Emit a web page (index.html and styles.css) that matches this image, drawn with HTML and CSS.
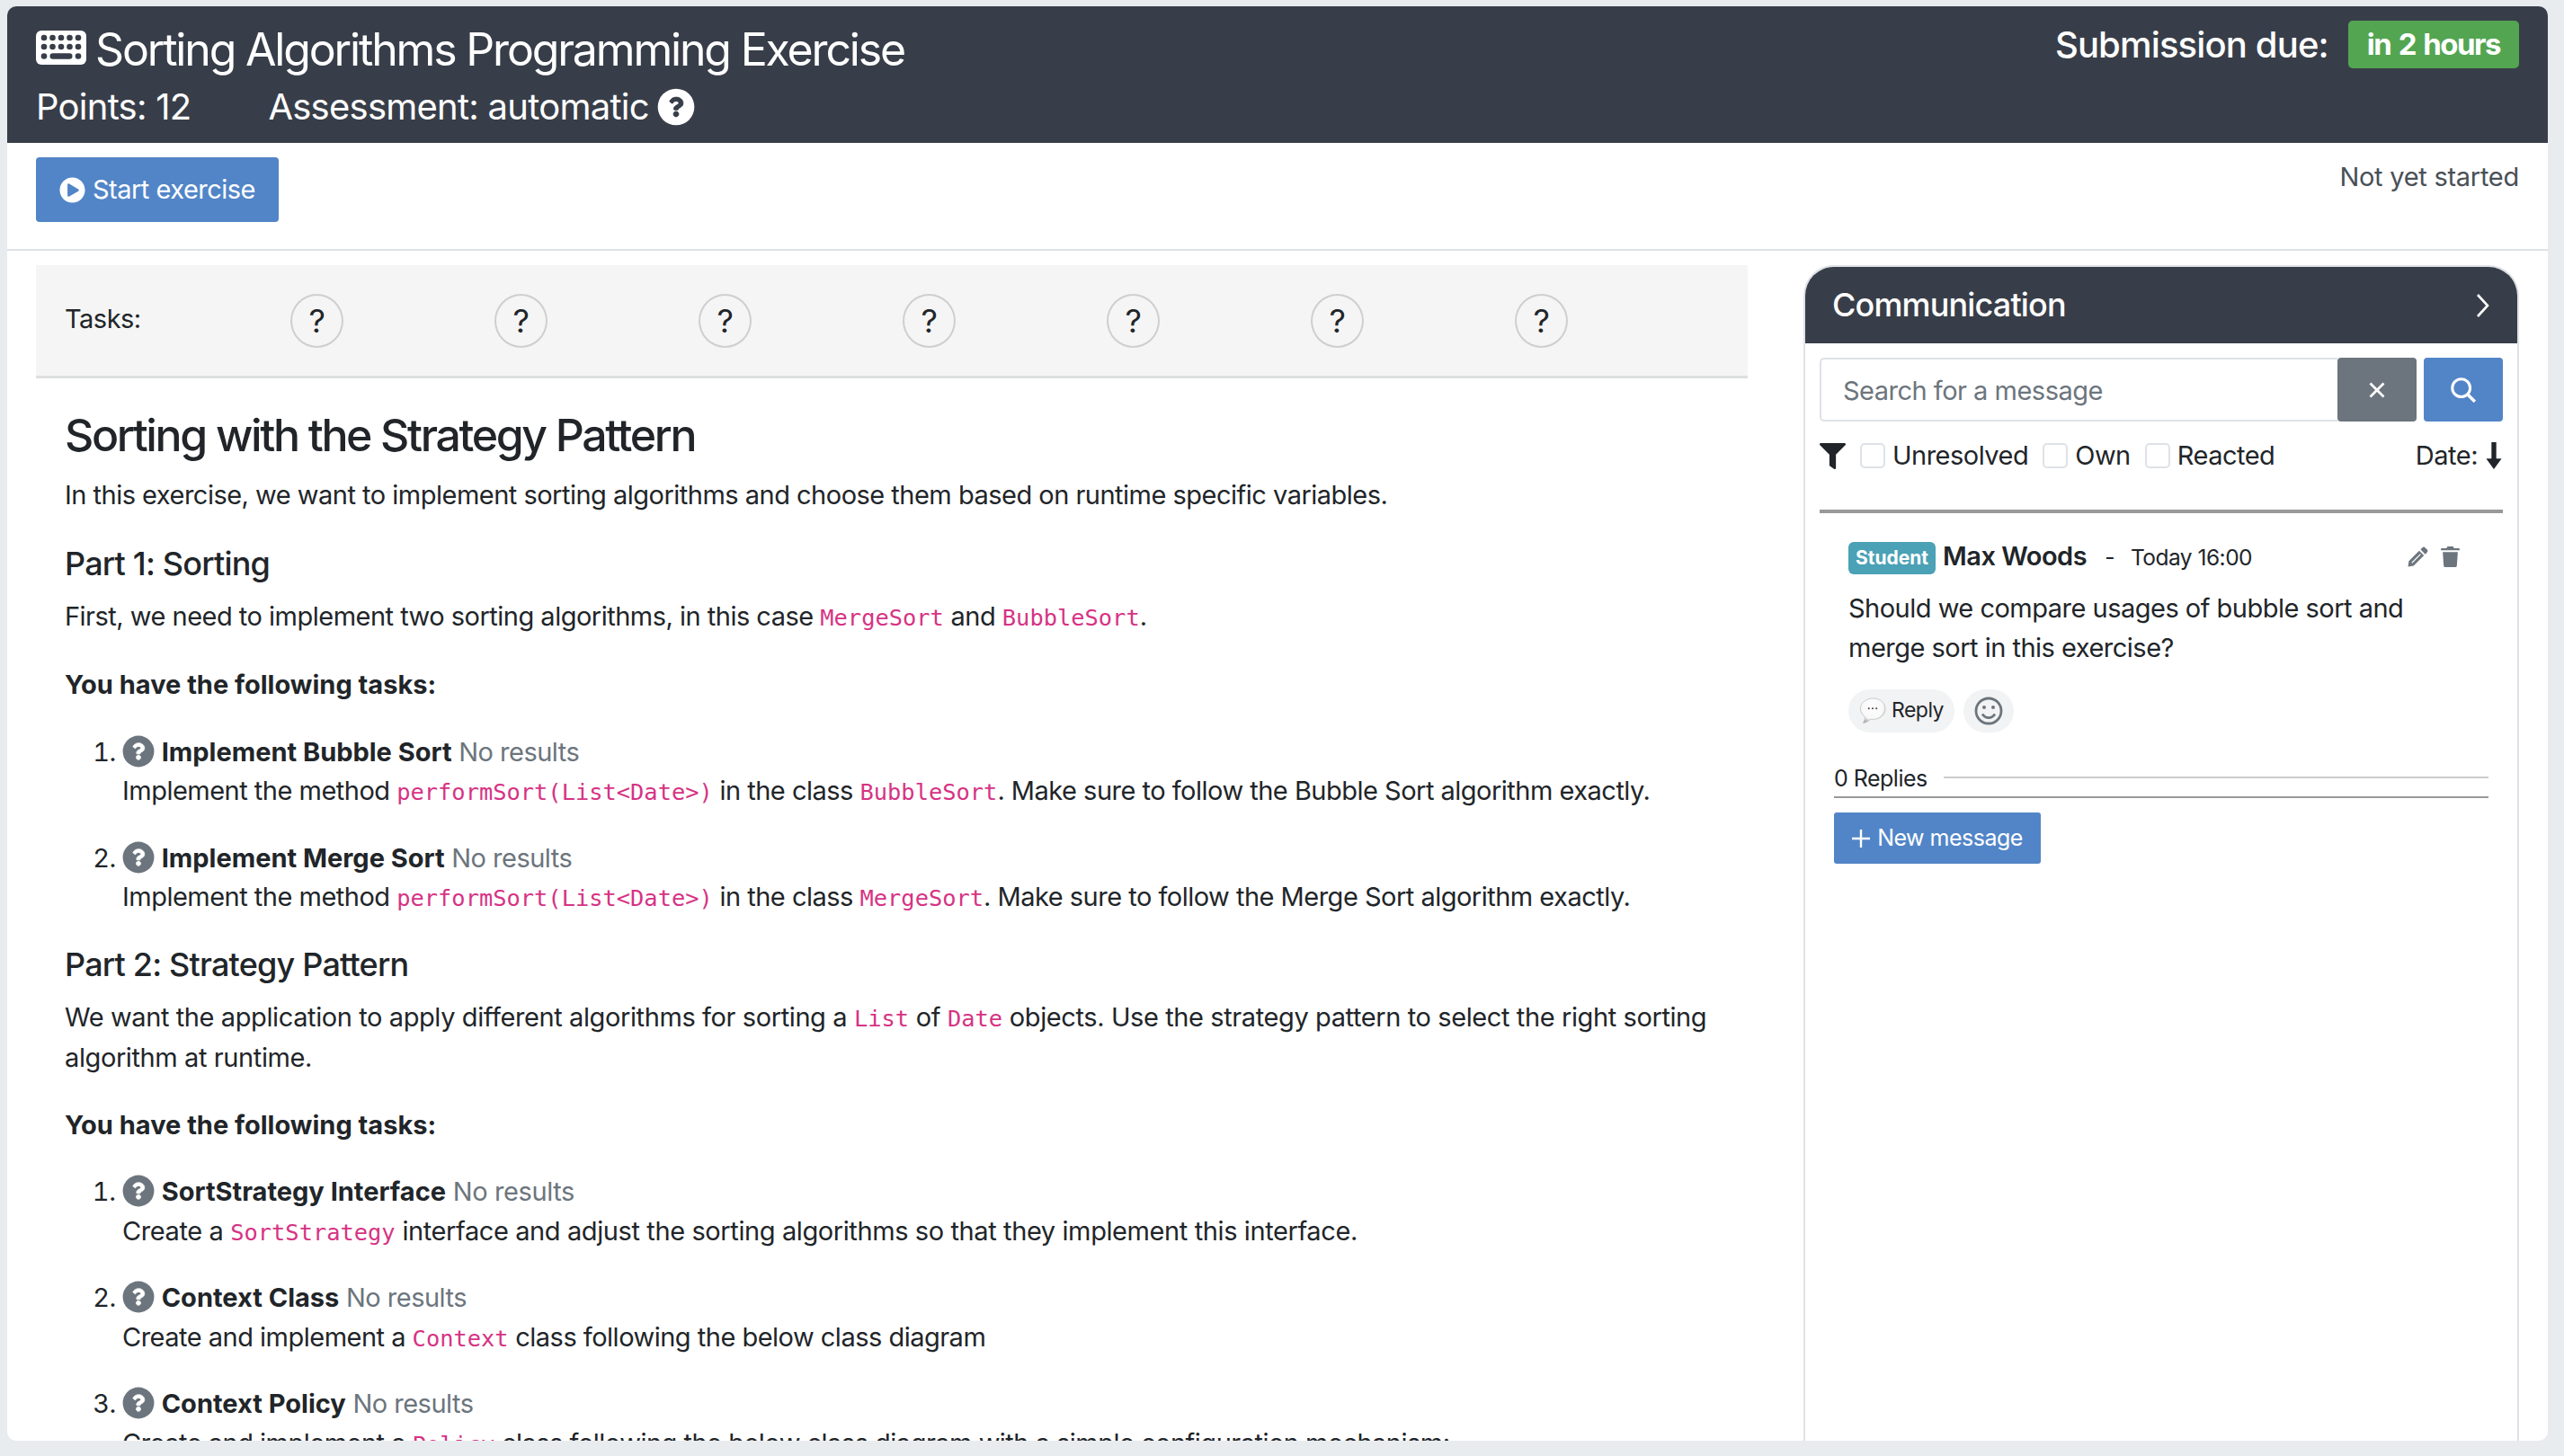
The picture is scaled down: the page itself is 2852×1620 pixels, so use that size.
FILE: index.html
```html
<!DOCTYPE html>
<html lang="en">
<head>
<meta charset="utf-8">
<title>Sorting Algorithms Programming Exercise</title>
<link rel="stylesheet" href="styles.css">
</head>
<body>
<svg class="defs" width="0" height="0" aria-hidden="true">
  <defs>
    <radialGradient id="bubble-fill" cx="48%" cy="38%" r="62%"><stop offset="0%" stop-color="#fff"/><stop offset="72%" stop-color="#f8f8f8"/><stop offset="100%" stop-color="#a8a8a8"/></radialGradient>
  </defs>
  <symbol id="q" viewBox="0 0 512 512"><circle cx="256" cy="256" r="248" fill="currentColor"/><path class="q-mark" transform="translate(256 256) scale(.78) translate(-256 -260)" d="M262.655 90c-54.497 0-89.255 22.957-116.549 63.758-3.536 5.286-2.353 12.415 2.715 16.258l34.699 26.31c5.205 3.947 12.621 3.008 16.665-2.122 17.864-22.658 30.113-35.797 57.303-35.797 20.429 0 45.698 13.148 45.698 32.958 0 14.976-12.363 22.667-32.534 33.976C247.128 238.528 216 254.941 216 296v4c0 6.627 5.373 12 12 12h56c6.627 0 12-5.373 12-12v-1.333c0-28.462 83.186-29.647 83.186-106.667 0-58.002-60.165-102-116.531-102zM256 338c-25.365 0-46 20.635-46 46 0 25.364 20.635 46 46 46s46-20.636 46-46c0-25.365-20.635-46-46-46z"/></symbol>
</svg>
<main class="card">
  <header class="head">
    <div class="head-left">
      <h1 class="title">
        <svg class="kbd" viewBox="0 0 56 38"><rect width="56" height="38" rx="6" fill="#fff"/><g fill="#383e49"><circle cx="9" cy="8" r="3.300"/><circle cx="18.500" cy="8" r="3.300"/><circle cx="28" cy="8" r="3.300"/><circle cx="37.500" cy="8" r="3.300"/><circle cx="47" cy="8" r="3.300"/><circle cx="9" cy="18" r="3.300"/><circle cx="18.500" cy="18" r="3.300"/><circle cx="28" cy="18" r="3.300"/><circle cx="37.500" cy="18" r="3.300"/><circle cx="47" cy="18" r="3.300"/><circle cx="9" cy="28.500" r="3.300"/><rect x="15.500" y="25.200" width="25" height="6.600" rx="3.300"/><circle cx="47" cy="28.500" r="3.300"/></g></svg>
        <span>Sorting Algorithms Programming Exercise</span>
      </h1>
      <div class="meta">
        <span>Points: 12</span>
        <span class="assess">Assessment: automatic <svg class="q-white"><use href="#q"/></svg></span>
      </div>
    </div>
    <div class="due">
      <span>Submission due:</span>
      <span class="due-badge">in 2 hours</span>
    </div>
  </header>

  <section class="actions">
    <button class="btn-start">
      <svg class="play" viewBox="0 0 512 512"><path d="M256 8C119 8 8 119 8 256s111 248 248 248 248-111 248-248S393 8 256 8zm115.700 272l-176 101c-15.800 8.800-35.700-2.500-35.700-20V152c0-17.400 19.800-28.800 35.700-20l176 107c16.400 9.200 16.400 32.900 0 41z"/></svg>
      Start exercise
    </button>
    <span class="status">Not yet started</span>
  </section>

  <div class="columns">
    <article class="content">
      <div class="tasks">
        <span class="tasks-label">Tasks:</span>
        <div class="task-list">
          <span class="task-dot">?</span><span class="task-dot">?</span><span class="task-dot">?</span><span class="task-dot">?</span><span class="task-dot">?</span><span class="task-dot">?</span><span class="task-dot">?</span>
        </div>
      </div>
      <div class="problem">
        <h2>Sorting with the Strategy Pattern</h2>
        <p class="intro">In this exercise, we want to implement sorting algorithms and choose them based on runtime specific variables.</p>
        <h3>Part 1: Sorting</h3>
        <p>First, we need to implement two sorting algorithms, in this case <code>MergeSort</code> and <code>BubbleSort</code>.</p>
        <p class="follow"><strong>You have the following tasks:</strong></p>
        <ol>
          <li><svg class="q-grey"><use href="#q"/></svg> <strong>Implement Bubble Sort</strong> <span class="muted">No results</span><br>Implement the method <code>performSort(List&lt;Date&gt;)</code> in the class <code>BubbleSort</code>. Make sure to follow the Bubble Sort algorithm exactly.</li>
          <li><svg class="q-grey"><use href="#q"/></svg> <strong>Implement Merge Sort</strong> <span class="muted">No results</span><br>Implement the method <code>performSort(List&lt;Date&gt;)</code> in the class <code>MergeSort</code>. Make sure to follow the Merge Sort algorithm exactly.</li>
        </ol>
        <h3>Part 2: Strategy Pattern</h3>
        <p class="loose">We want the application to apply different algorithms for sorting a <code>List</code> of <code>Date</code> objects. Use the strategy pattern to select the right sorting algorithm at runtime.</p>
        <p class="follow"><strong>You have the following tasks:</strong></p>
        <ol>
          <li class="loose"><svg class="q-grey"><use href="#q"/></svg> <strong>SortStrategy Interface</strong> <span class="muted">No results</span><br>Create a <code>SortStrategy</code> interface and adjust the sorting algorithms so that they implement this interface.</li>
          <li><svg class="q-grey"><use href="#q"/></svg> <strong>Context Class</strong> <span class="muted">No results</span><br>Create and implement a <code>Context</code> class following the below class diagram</li>
          <li><svg class="q-grey"><use href="#q"/></svg> <strong>Context Policy</strong> <span class="muted">No results</span><br>Create and implement a <code>Policy</code> class following the below class diagram with a simple configuration mechanism:</li>
        </ol>
      </div>
    </article>

    <aside class="comm">
      <div class="comm-head">
        <span>Communication</span>
        <svg class="chev" viewBox="0 0 16 28"><path d="M2 2l11 12L2 26" fill="none" stroke="currentColor" stroke-width="2.600"/></svg>
      </div>
      <div class="comm-body">
        <div class="search">
          <span class="search-input">Search for a message</span>
          <span class="search-clear"><svg viewBox="0 0 16 16"><path d="M2 2l12 12M14 2L2 14" stroke="currentColor" stroke-width="2.200" fill="none"/></svg></span>
          <span class="search-go"><svg viewBox="0 0 24 24"><circle cx="10" cy="10" r="8.500" fill="none" stroke="currentColor" stroke-width="2.600"/><path d="M16 16l7 7" stroke="currentColor" stroke-width="3" fill="none"/></svg></span>
        </div>
        <div class="filters">
          <svg class="funnel" viewBox="0 0 512 512"><path d="M487.976 0H24.028C2.710 0-8.047 25.866 7.058 40.971L192 225.941V432c0 7.831 3.821 15.170 10.237 19.662l80 55.980C298.020 518.690 320 507.493 320 487.980V225.941l184.947-184.970C520.021 25.896 509.338 0 487.976 0z"/></svg>
          <span class="check"></span><span class="check-label">Unresolved</span>
          <span class="check"></span><span class="check-label">Own</span>
          <span class="check"></span><span class="check-label">Reacted</span>
          <span class="sort">Date: <svg class="arrow" viewBox="0 0 16 28"><path d="M8 0v20" stroke="currentColor" stroke-width="5" fill="none"/><path d="M0 17h16L8 28z"/></svg></span>
        </div>
        <div class="thread">
          <div class="post">
            <div class="post-head">
              <span class="role">Student</span>
              <span class="author">Max Woods</span>
              <span class="when"><span class="dash">-</span>Today 16:00</span>
              <span class="post-tools">
                <svg class="tool-pencil" viewBox="0 0 24 24"><path d="M17 1.500a2.500 2.500 0 0 1 3.500 0l2 2a2.500 2.500 0 0 1 0 3.500L20.500 9l-5.500-5.500zM13.500 5l5.500 5.500L7 22.500 0.500 23.500 1.500 17z"/><path d="M5 19l10-10" stroke="#fff" stroke-width="1.300" fill="none"/></svg>
                <svg class="tool-trash" viewBox="0 0 20 22"><path d="M7 0h6l1 2h5a1 1 0 0 1 1 1v1H0V3a1 1 0 0 1 1-1h5zM2 6h16l-1 14.500a1.600 1.600 0 0 1-1.600 1.500H4.600A1.600 1.600 0 0 1 3 20.500z"/></svg>
              </span>
            </div>
            <p class="post-text">Should we compare usages of bubble sort and merge sort in this exercise?</p>
            <div class="post-actions">
              <span class="pill">
                <svg class="bubble" viewBox="0 0 32 32"><path d="M16.500 1C8 1 1.500 6.700 1.500 13.500c0 3.800 2 7.200 5.300 9.500.2 2.500-.8 5.500-2.300 7.500 3.500-.5 7-2.700 9.200-4.600.9.100 1.800.1 2.800.1 8.500 0 14.500-5.700 14.500-12.500S25 1 16.500 1z" fill="url(#bubble-fill)" stroke="#bdbdbd" stroke-width=".8"/><circle cx="11.500" cy="13" r="1.100" fill="#444"/><circle cx="16" cy="13" r="1.100" fill="#444"/><circle cx="20.500" cy="13" r="1.100" fill="#444"/></svg>
                Reply
              </span>
              <span class="pill pill-round">
                <svg class="smile" viewBox="0 0 32 32"><circle cx="16" cy="16" r="14" fill="none" stroke="#6c757d" stroke-width="2.800"/><circle cx="11" cy="12" r="2" fill="#6c757d"/><circle cx="21" cy="12" r="2" fill="#6c757d"/><path d="M9 19.500c2 3 4.500 4.200 7 4.200s5-1.200 7-4.200" fill="none" stroke="#6c757d" stroke-width="2.800"/></svg>
              </span>
            </div>
          </div>
          <div class="replies">
            <span>0 Replies</span>
            <span class="replies-line"></span>
          </div>
          <button class="btn-new"><svg viewBox="0 0 20 20"><path d="M10 0v20M0 10h20" stroke="currentColor" stroke-width="2.400" fill="none"/></svg>New message</button>
        </div>
      </div>
    </aside>
  </div>
</main>
</body>
</html>
```

FILE: styles.css
```css
* { box-sizing: border-box; }
html, body { height: 100%; }
body {
  margin: 0;
  padding: 7px 18px 17px 8px;
  background: #e9ecef;
  font-family: Inter, "Liberation Sans", sans-serif;
  font-size: 29px;
  line-height: 43.5px;
  letter-spacing: -0.51px;
  color: #212529;
  overflow: hidden;
}
.defs { position: absolute; }
.card {
  height: 1596px;
  background: #fff;
  border-radius: 10px;
  overflow: hidden;
  display: flex;
  flex-direction: column;
}
.head {
  height: 152px;
  flex: none;
  background: #383e49;
  color: #fff;
  padding: 16px 32px 0 32px;
  display: flex;
  justify-content: space-between;
  align-items: flex-start;
}
.title {
  margin: 0;
  display: flex;
  align-items: center;
  gap: 10px;
  font-size: 50px;
  line-height: 64px;
  font-weight: 400;
  letter-spacing: -2.17px;
}
.kbd { width: 56px; height: 38px; margin-top: -4px; }
.meta {
  display: flex;
  gap: 86px;
  font-size: 40px;
  line-height: 60px;
  margin-top: 2px;
  letter-spacing: -0.75px;
}
.assess { display: inline-flex; align-items: center; gap: 9px; }
.q-white { width: 42px; height: 42px; color: #fff; --mark: #383e49; }
.q-mark { fill: var(--mark); stroke: var(--mark); stroke-width: 14px; }
.due { display: flex; align-items: center; gap: 22px; font-size: 40px; line-height: 53px; font-weight: 500; letter-spacing: -0.85px; }
.due-badge {
  background: #53a552;
  font-size: 33px;
  font-weight: 700;
  padding: 0 21px;
  border-radius: 5px;
  letter-spacing: -1.5px;
  word-spacing: 2px;
}
.actions {
  flex: none;
  height: 120px;
  padding: 16px 32px 0;
  border-bottom: 2px solid #dee2e6;
  display: flex;
  justify-content: space-between;
  align-items: flex-start;
}
.btn-start {
  height: 72px;
  width: 270px;
  border: 0;
  border-radius: 4px;
  background: #5285c7;
  color: #fff;
  font: inherit;
  letter-spacing: inherit;
  display: flex;
  align-items: center;
  justify-content: center;
  gap: 8px;
}
.play { width: 29px; height: 29px; fill: #fff; }
.status { color: #495057; line-height: 43px; letter-spacing: -0.27px; }
.columns {
  flex: 1;
  min-height: 0;
  display: flex;
  justify-content: space-between;
  padding: 16px 32px 0 32px;
}
.content { width: 1904px; flex: none; }
.tasks {
  height: 126px;
  background: #f5f5f5;
  border-bottom: 3px solid #dee0e0;
  padding: 0 32px;
  display: flex;
  align-items: center;
}
.tasks-label { width: 251px; margin-top: -4px; }
.task-list { display: flex; gap: 168px; }
.task-dot {
  width: 59px;
  height: 60px;
  border: 2px solid #cfcfcf;
  border-radius: 50%;
  display: flex;
  align-items: center;
  justify-content: center;
  font-size: 36px;
  line-height: 1;
}
.problem { padding: 30px 32px 0; }
h2 { margin: 0 0 12px; font-size: 50px; line-height: 66px; font-weight: 500; letter-spacing: -2.35px; }
h3 { margin: 0 0 14px; font-size: 36px; line-height: 46px; font-weight: 500; letter-spacing: -0.8px; }
p { margin: 0 0 31px; }
.intro { margin-bottom: 31px; }
.follow { margin-bottom: 31px; }
.loose { letter-spacing: -0.4px; }
ol { margin: 0 0 28px; padding: 0 0 0 64px; }
li { margin-bottom: 29px; }
li:last-child { margin-bottom: 0; }
strong { font-weight: 700; letter-spacing: 0; }
.muted { color: #6c757d; }
code {
  font-family: "DejaVu Sans Mono", monospace;
  font-size: 25.4px;
  letter-spacing: 0;
  color: #d63384;
}
.q-grey { width: 36px; height: 36px; color: #6c757d; --mark: #fff; vertical-align: -7px; }
.comm {
  width: 796px;
  height: 1400px;
  flex: none;
  border: 2px solid #dee2e6;
  border-bottom: 0;
  border-radius: 34px 34px 0 0;
  overflow: hidden;
}
.comm-head {
  height: 85px;
  background: #383e49;
  color: #fff;
  padding: 0 30px;
  display: flex;
  align-items: center;
  justify-content: space-between;
  font-size: 36px;
  font-weight: 500;
  letter-spacing: -0.85px;
}
.chev { width: 16px; height: 28px; }
.comm-body { padding: 16px 16px 0; }
.search { display: flex; height: 71px; }
.search-input {
  flex: 1;
  border: 2px solid #dee2e6;
  border-right: 0;
  border-radius: 5px 0 0 5px;
  padding: 2px 24px 0;
  display: flex;
  align-items: center;
  color: #6c757d;
}
.search-clear, .search-go {
  width: 88px;
  display: flex;
  align-items: center;
  justify-content: center;
  color: #fff;
  border-radius: 4px;
}
.search-clear { background: #6c757d; margin-right: 8px; }
.search-clear svg { width: 20px; height: 20px; }
.search-go { background: #5285c7; }
.search-go svg { width: 28px; height: 28px; }
.filters {
  display: flex;
  align-items: center;
  height: 44px;
  margin-top: 16px;
}
.funnel { width: 29px; height: 29px; fill: #212529; margin-right: 16px; }
.check {
  width: 28px;
  height: 28px;
  border: 2px solid #dee2e6;
  border-radius: 5px;
  margin-right: 8px;
}
.check-label { margin-right: 16px; }
.sort { margin-left: auto; display: flex; align-items: center; gap: 8px; }
.arrow { width: 20px; height: 30px; fill: #212529; }
.thread { border-top: 4px solid #999; margin-top: 38px; }
.post { padding: 30px 32px 0; }
.post-head { display: flex; align-items: center; height: 40px; }
.role {
  background: #4ba1b5;
  color: #fff;
  font-size: 21px;
  font-weight: 700;
  line-height: 36px;
  padding: 0 8px;
  border-radius: 6px;
  margin-right: 8px;
  letter-spacing: 0;
}
.author { font-weight: 600; margin-top: -4px; }
.when { font-size: 24.5px; margin-left: 20px; }
.dash { margin-right: 18px; }
.post-tools { margin-left: auto; margin-right: 16px; display: flex; gap: 14px; margin-top: -4px; }
.post-tools svg { fill: #6c757d; }
.tool-pencil { width: 23px; height: 23px; }
.tool-trash { width: 21px; height: 23px; }
.post-text { margin: 14px 0 0; line-height: 43.5px; width: 660px; }
.post-actions { display: flex; gap: 10px; margin-top: 25px; }
.pill {
  height: 48px;
  border-radius: 24px;
  background: #f2f3f4;
  display: flex;
  align-items: center;
  gap: 6px;
  padding: 0 12px;
  font-size: 23px;
}
.pill-round { width: 56px; justify-content: center; padding: 0; }
.bubble { width: 30px; height: 30px; }
.smile { width: 32px; height: 32px; }
.replies {
  margin: 33px 16px 0;
  height: 40px;
  border-bottom: 2px solid #999;
  display: flex;
  align-items: center;
  gap: 18px;
  font-size: 25px;
}
.replies-line { flex: 1; height: 2px; background: #ccc; margin-top: -4px; }
.btn-new {
  display: flex;
  align-items: center;
  justify-content: center;
  gap: 8px;
  margin: 16px 0 0 16px;
  width: 230px;
  height: 57px;
  border: 0;
  border-radius: 3px;
  background: #5285c7;
  color: #fff;
  font: inherit;
  font-size: 25px;
  letter-spacing: inherit;
}
.btn-new svg { width: 20px; height: 20px; }
```
